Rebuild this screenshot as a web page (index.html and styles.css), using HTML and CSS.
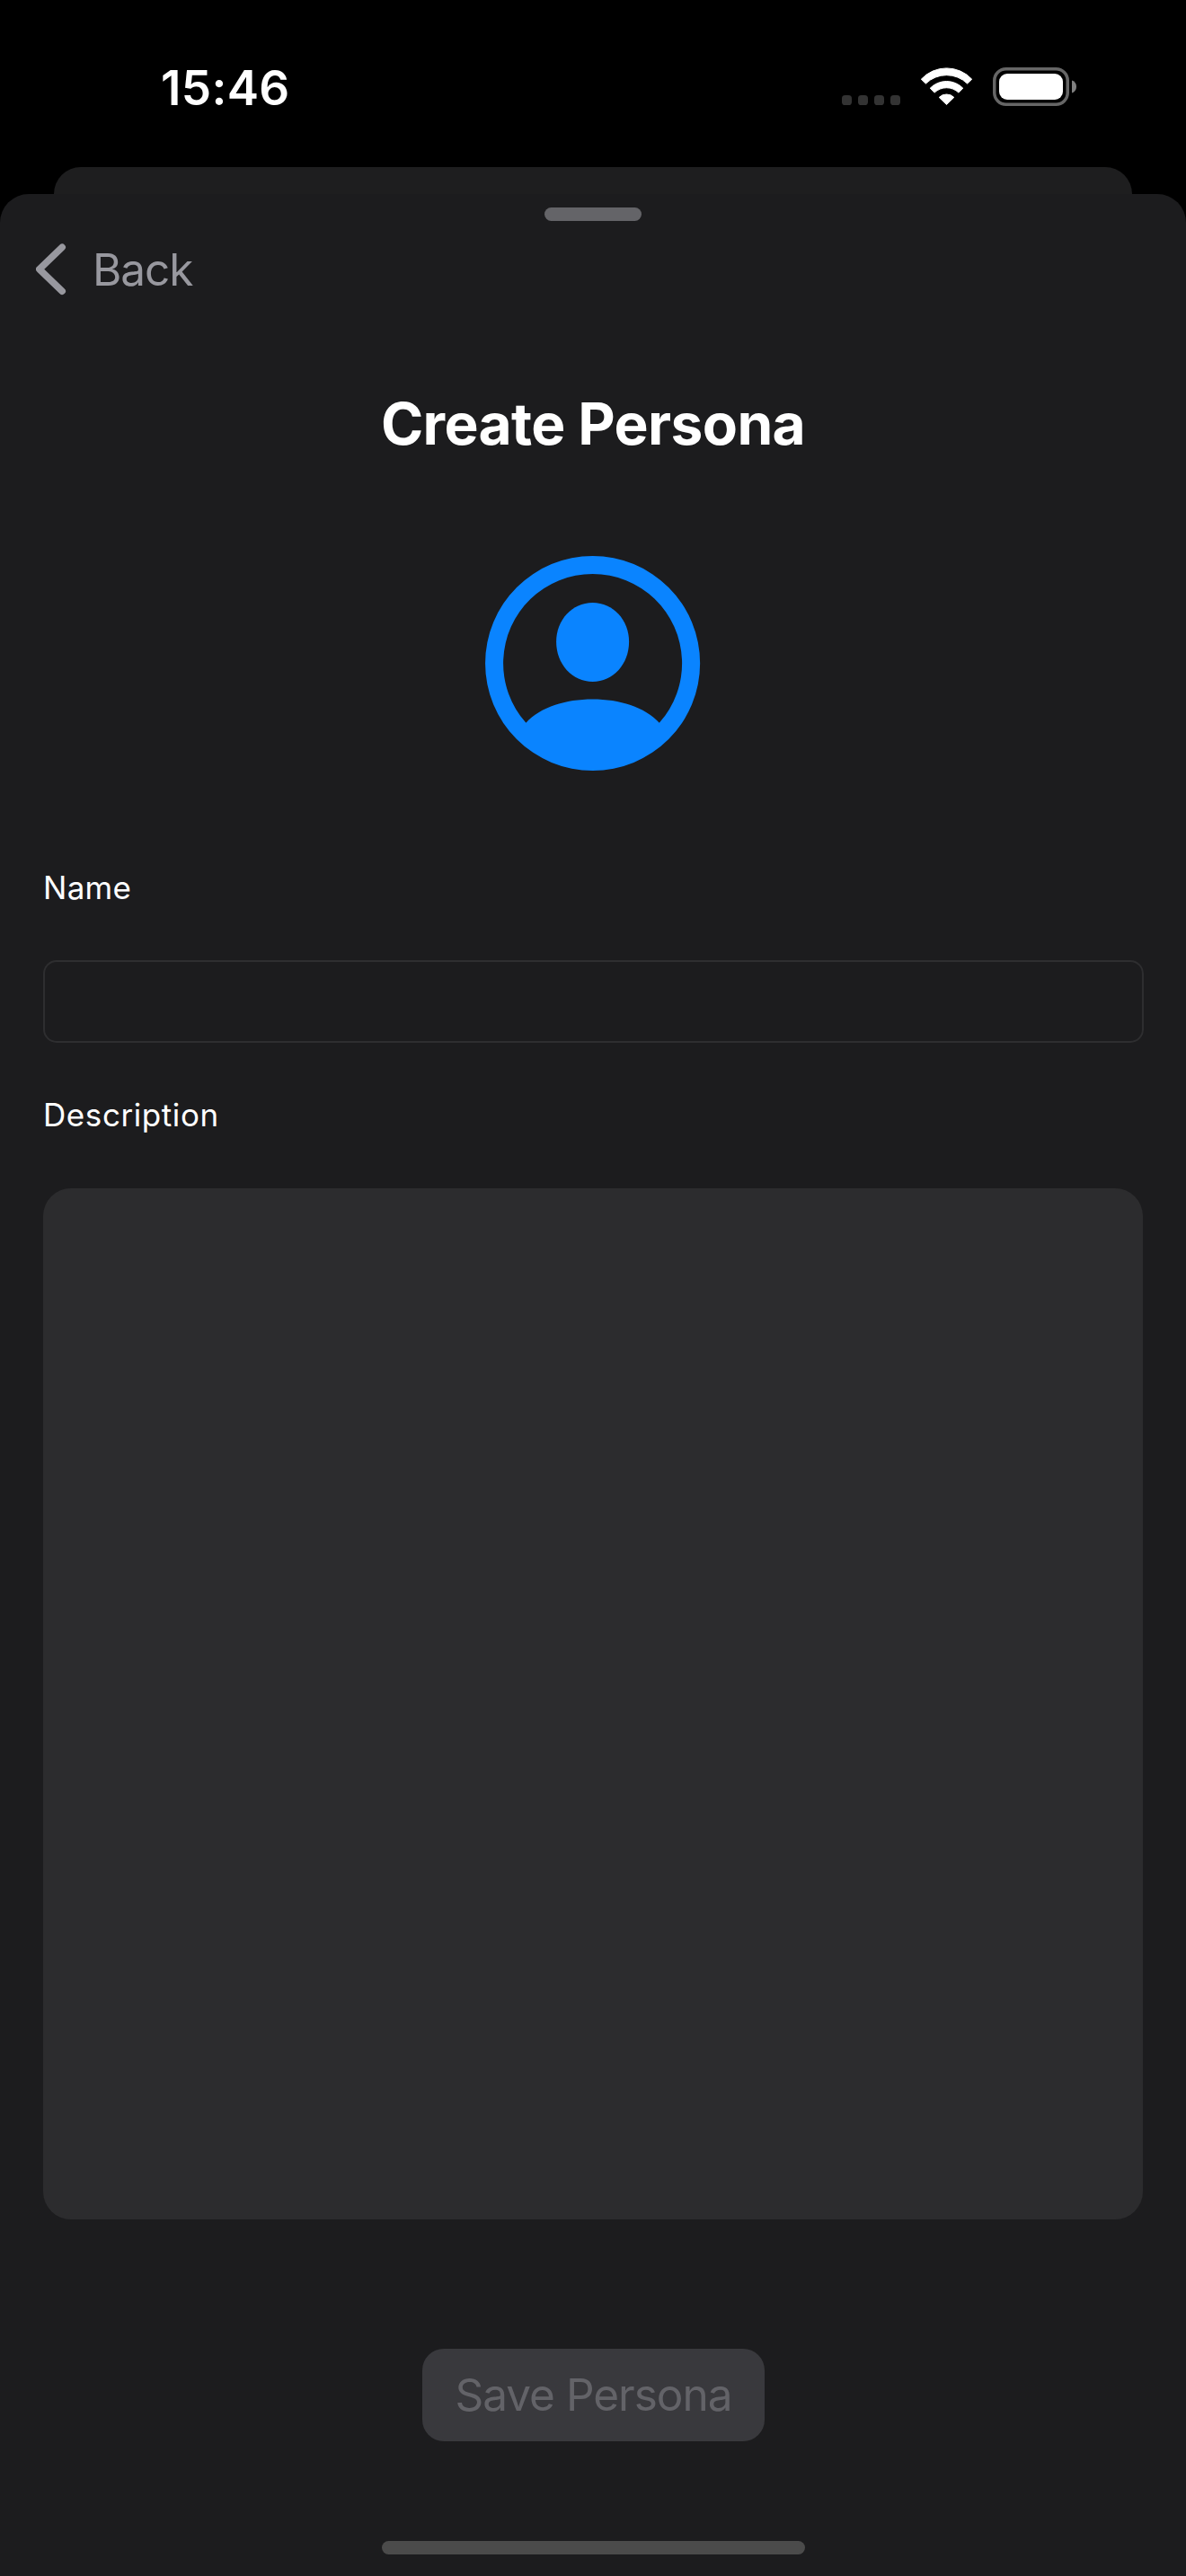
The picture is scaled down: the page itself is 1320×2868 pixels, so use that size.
FILE: index.html
```html
<!DOCTYPE html>
<html lang="en">
<head>
<meta charset="utf-8">
<title>Create Persona</title>
<link rel="stylesheet" href="styles.css">
</head>
<body>
<div class="screen">
  <header class="status-bar">
    <span class="time">15:46</span>
    <div class="indicators">
      <svg class="signal" width="65" height="11" viewBox="0 0 65 11" fill="#333"><rect width="11" height="11" rx="3.6"/><rect x="18" width="11" height="11" rx="3.6"/><rect x="36" width="11" height="11" rx="3.6"/><rect x="54" width="11" height="11" rx="3.6"/></svg>
      <svg class="wifi" width="59" height="43" viewBox="0 0 59 43" fill="#fff" stroke="#fff" stroke-width="1" stroke-linejoin="round"><path d="M1.3 13.2A38.5 38.5 0 0 1 57.7 13.2L52.6 18.1A33 33 0 0 0 6.4 18.1Z"/><path d="M11.2 23.2A25.6 25.6 0 0 1 47.8 23.2L42.9 28.1A19.4 19.4 0 0 0 16.1 28.1Z"/><path d="M21.2 33.4A11.8 11.8 0 0 1 37.8 33.4L29.5 41.5Z"/></svg>
      <svg class="battery" width="94" height="43" viewBox="0 0 94 43"><rect x="1.75" y="1.75" width="81.5" height="39.5" rx="13" fill="none" stroke="#666" stroke-width="3.5"/><rect x="7" y="7" width="71" height="29" rx="9" fill="#fff"/><path d="M88 14.5Q93 16.3 93 21.5T88 28.5Z" fill="#808080"/></svg>
    </div>
  </header>
  <div class="back-card"></div>
  <main class="sheet">
    <div class="grabber"></div>
    <a class="back">
      <svg width="34" height="58" viewBox="0 0 34 58" fill="none" stroke="#98989f" stroke-width="7.6" stroke-linecap="round" stroke-linejoin="round"><path d="M29.2 4.3L3.8 28.7L29.2 53.2"/></svg>
      <span class="back-label">Back</span>
    </a>
    <h1 class="title">Create Persona</h1>
    <svg class="avatar" width="240" height="240" viewBox="0.4 -0.5 240 240" fill="#0a84ff"><path fill-rule="evenodd" d="M120 .5A119.5 119.5 0 1 1 120 239.5A119.5 119.5 0 1 1 120 .5ZM45.8 186.3C62 168.5 90 160 120 160C150 160 178 168.500 194.200 186.300A99.500 99.500 0 1 0 45.800 186.300Z"/><path d="M120 52.500C143 52.500 160.500 72 160.500 96C160.500 121 142.500 140.500 120 140.500C97.500 140.500 79.500 121 79.500 96C79.500 72 97 52.500 120 52.500Z"/></svg>
    <label class="label name-label" for="name">Name</label>
    <input class="name-input" id="name" type="text">
    <label class="label description-label" for="description">Description</label>
    <textarea class="description-input" id="description"></textarea>
    <button class="save" disabled><span class="save-label">Save Persona</span></button>
    <div class="home-indicator"></div>
  </main>
</div>
</body>
</html>
```

FILE: styles.css
```css
* { box-sizing: border-box; }

body {
  margin: 0;
  background: #000;
  font-family: Inter, "Liberation Sans", sans-serif;
}

.screen {
  display: flex;
  flex-direction: column;
  width: 1320px;
  height: 2868px;
  overflow: hidden;
}

.status-bar {
  display: flex;
  justify-content: space-between;
  height: 186px;
  padding: 68px 121px 0 179px;
}

.time {
  color: #fff;
  font-size: 53px;
  font-weight: 600;
  line-height: 60px;
  letter-spacing: 0.35px;
}

.indicators {
  display: flex;
  align-items: flex-end;
  height: 50px;
}

.signal { margin: 0 22px 1px 0; }
.wifi { margin-right: 22px; }

.back-card {
  height: 30px;
  margin: 0 60px;
  border-radius: 30px 30px 0 0;
  background: #1e1e1f;
}

.sheet {
  display: flex;
  flex: 1;
  flex-direction: column;
  align-items: center;
  padding: 15px 48px 0;
  border-radius: 32px 32px 0 0;
  background: #1c1c1e;
}

.grabber {
  width: 108px;
  height: 15px;
  border-radius: 8px;
  background: #646468;
}

.back {
  display: flex;
  align-items: center;
  align-self: flex-start;
  height: 60px;
  margin: 24px 0 0 -8px;
  color: #98989f;
}

.back-label {
  margin-left: 29px;
  font-size: 49.5px;
  line-height: 60px;
  letter-spacing: -1.05px;
}

.title {
  margin: 103px 0 0;
  color: #fff;
  font-size: 64px;
  font-weight: 700;
  line-height: 78px;
  letter-spacing: -0.63px;
}

.avatar { margin-top: 107px; }

.label {
  align-self: flex-start;
  color: #fff;
  font-size: 35px;
  line-height: 48px;
}

.name-label {
  margin-top: 106px;
  letter-spacing: 0.3px;
}

.name-input {
  width: 1225px;
  height: 92px;
  margin-top: 57px;
  padding: 0 20px;
  border: 2px solid #2e2e30;
  border-radius: 15px;
  background: transparent;
  color: #fff;
  font: inherit;
  font-size: 49px;
}

.description-label {
  margin-top: 56px;
  letter-spacing: 0.58px;
}

.description-input {
  width: 1224px;
  height: 1148px;
  margin-top: 58px;
  padding: 24px;
  border: 0;
  border-radius: 31px;
  background: #2c2c2e;
  color: #fff;
  font: inherit;
  font-size: 49px;
  resize: none;
}

.save {
  width: 381px;
  height: 103px;
  margin: 144px 0 0 1px;
  padding: 0;
  border: 0;
  border-radius: 24px;
  background: #39393d;
  color: #636368;
  font: inherit;
  font-size: 49.5px;
  line-height: 103px;
  white-space: nowrap;
}

.save-label { letter-spacing: -1px; }

.home-indicator {
  width: 471px;
  height: 15px;
  margin: 111px 0 0 1px;
  border-radius: 8px;
  background: #4b4b4b;
}
```
